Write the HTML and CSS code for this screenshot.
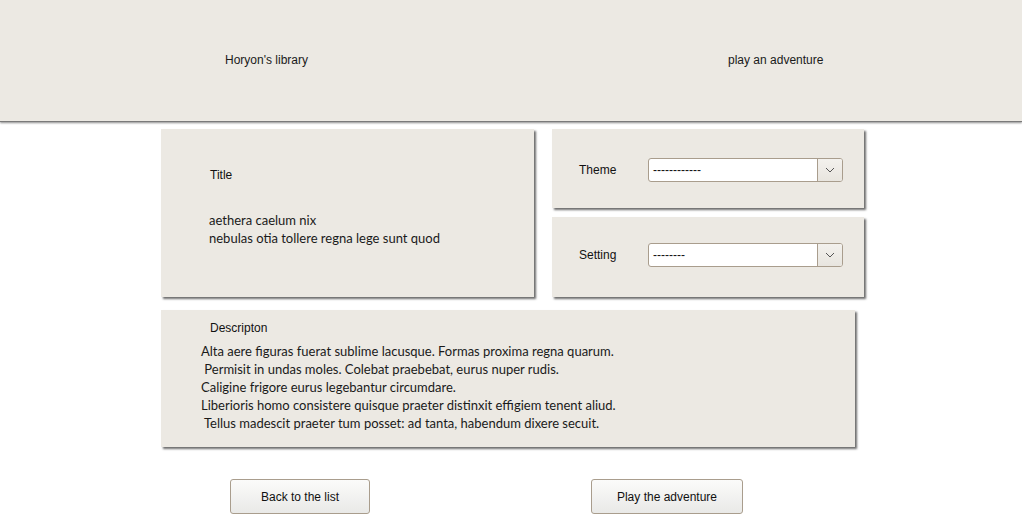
FILE: index.html
```html
<!DOCTYPE html>
<html>
<head>
<meta charset="utf-8">
<link rel="stylesheet" href="styles.css">
</head>
<body>
<header class="topbar">
  <span class="nav-home">Horyon's library</span>
  <span class="nav-play">play an adventure</span>
</header>
<main class="page">
  <div class="row-top">
    <section class="card card-title">
      <div class="label title-label">Title</div>
      <div class="body-text">aethera caelum nix<br>nebulas otia tollere regna lege sunt quod</div>
    </section>
    <div class="side">
      <section class="card card-field">
        <span class="label field-label">Theme</span>
        <div class="select">
          <span class="select-value">------------</span>
          <span class="select-btn"><svg width="10" height="6" viewBox="0 0 10 6"><path d="M1 1 L5 5 L9 1" fill="none" stroke="#555" stroke-width="1"/></svg></span>
        </div>
      </section>
      <section class="card card-field card-setting">
        <span class="label field-label">Setting</span>
        <div class="select">
          <span class="select-value">--------</span>
          <span class="select-btn"><svg width="10" height="6" viewBox="0 0 10 6"><path d="M1 1 L5 5 L9 1" fill="none" stroke="#555" stroke-width="1"/></svg></span>
        </div>
      </section>
    </div>
  </div>
  <section class="card card-desc">
    <div class="label desc-label">Descripton</div>
    <div class="body-text desc-text">Alta aere figuras fuerat sublime lacusque. Formas proxima regna quarum.
 Permisit in undas moles. Colebat praebebat, eurus nuper rudis.
Caligine frigore eurus legebantur circumdare.
Liberioris homo consistere quisque praeter distinxit effigiem tenent aliud.
 Tellus madescit praeter tum posset: ad tanta, habendum dixere secuit.</div>
  </section>
  <div class="actions">
    <button class="btn btn-back">Back to the list</button>
    <button class="btn btn-play">Play the adventure</button>
  </div>
</main>
</body>
</html>
```
FILE: styles.css
```css
html, body {
  margin: 0;
  padding: 0;
  background: #ffffff;
}
body {
  font-family: "Liberation Sans", Arial, sans-serif;
  font-size: 12px;
  color: #1a1a1a;
}
.topbar {
  height: 122px;
  background: #ece9e3;
  border-bottom: 1px solid #7a7a7a;
  box-shadow: 0 1px 2px rgba(0, 0, 0, 0.45);
  display: flex;
  align-items: center;
  box-sizing: border-box;
  padding-bottom: 2px;
}
.nav-home {
  margin-left: 225px;
  width: 503px;
}
.page {
  width: 704px;
  margin-left: 161px;
  padding-top: 7px;
}
.row-top {
  display: flex;
  gap: 18px;
}
.card {
  background: #ece9e3;
  box-shadow: 2px 2px 2px rgba(60, 60, 60, 0.75);
  box-sizing: border-box;
}
.card-title {
  width: 373px;
  height: 168px;
  padding: 39px 0 0 48px;
}
.label {
  font-family: "Liberation Sans", Arial, sans-serif;
  font-size: 12px;
  line-height: 14px;
  color: #111;
}
.title-label {
  margin-left: 1px;
}
.body-text {
  font-family: Lato, "Open Sans", sans-serif;
  font-size: 13px;
  line-height: 18px;
  color: #1a1a1a;
}
.card-title .body-text {
  margin-top: 29px;
}
.side {
  display: flex;
  flex-direction: column;
  gap: 9px;
}
.card-field {
  width: 312px;
  height: 79px;
  display: flex;
  align-items: center;
  padding-left: 27px;
  padding-top: 2px;
}
.card-setting {
  height: 80px;
  padding-top: 0;
  padding-bottom: 5px;
}
.field-label {
  width: 69px;
}
.select {
  width: 195px;
  height: 24px;
  box-sizing: border-box;
  border: 1px solid #a99d8d;
  border-radius: 3px;
  background: #ffffff;
  display: flex;
  align-items: stretch;
  overflow: hidden;
}
.select-value {
  flex: 1;
  display: flex;
  align-items: center;
  padding-left: 4px;
  font-size: 12px;
  color: #111;
}
.select-btn {
  width: 24px;
  border-left: 1px solid #a99d8d;
  background: linear-gradient(#f3f1ed, #e8e5df);
  display: flex;
  align-items: center;
  justify-content: center;
}
.card-desc {
  margin-top: 13px;
  width: 694px;
  height: 137px;
  padding: 11px 0 0 40px;
}
.desc-label {
  margin-left: 9px;
}
.desc-text {
  margin-top: 7px;
  white-space: pre;
}
.actions {
  display: flex;
  margin-top: 32px;
}
.btn {
  height: 35px;
  box-sizing: border-box;
  border: 1px solid #a99d8d;
  border-radius: 3px;
  background: linear-gradient(#fbfbfa, #e9e9e7);
  font-family: "Liberation Sans", Arial, sans-serif;
  font-size: 12px;
  color: #111;
  padding: 0;
  padding-top: 1px;
}
.btn-back {
  margin-left: 69px;
  width: 140px;
}
.btn-play {
  margin-left: 221px;
  width: 152px;
}
```
